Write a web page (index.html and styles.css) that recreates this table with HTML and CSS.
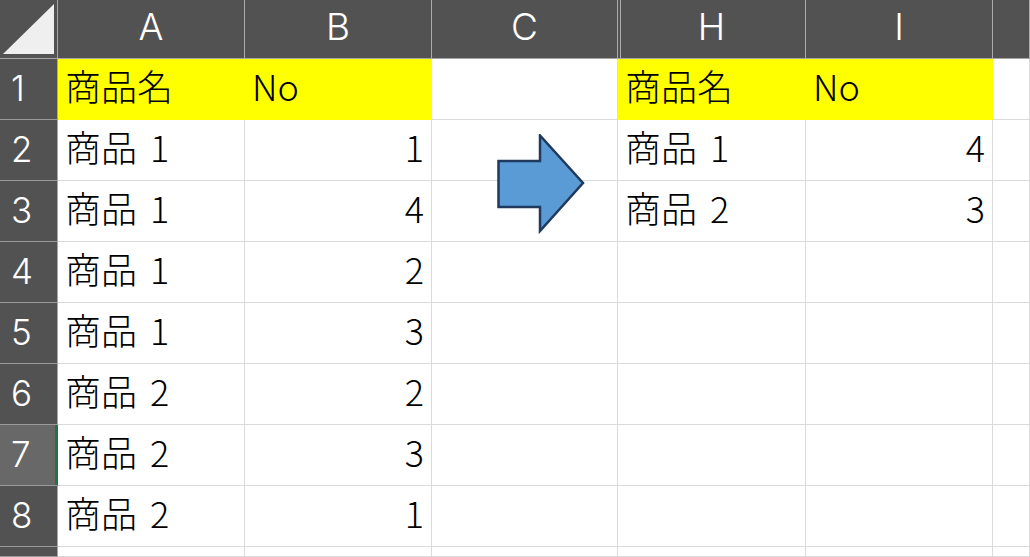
FILE: index.html
```html
<!DOCTYPE html>
<html lang="ja">
<head>
<meta charset="utf-8">
<title>Sheet</title>
<link rel="stylesheet" href="styles.css">
</head>
<body>
<div class="sheet">
  <div class="corner"><svg width="57" height="58" viewBox="0 0 57 58"><polygon points="3,54 54,4 54,54" fill="#efefef"/></svg></div>
  <div class="colhead">A</div>
  <div class="colhead">B</div>
  <div class="colhead">C</div>
  <div class="colhead hidden-before">H</div>
  <div class="colhead">I</div>
  <div class="colhead"></div>

  <div class="rowhead">1</div>
  <div class="cell yellow">商品名</div>
  <div class="cell yellow">No</div>
  <div class="cell"></div>
  <div class="cell yellow">商品名</div>
  <div class="cell yellow">No</div>
  <div class="cell"></div>

  <div class="rowhead">2</div>
  <div class="cell">商品 1</div>
  <div class="cell num">1</div>
  <div class="cell"></div>
  <div class="cell">商品 1</div>
  <div class="cell num">4</div>
  <div class="cell"></div>

  <div class="rowhead">3</div>
  <div class="cell">商品 1</div>
  <div class="cell num">4</div>
  <div class="cell"></div>
  <div class="cell">商品 2</div>
  <div class="cell num">3</div>
  <div class="cell"></div>

  <div class="rowhead">4</div>
  <div class="cell">商品 1</div>
  <div class="cell num">2</div>
  <div class="cell"></div>
  <div class="cell"></div>
  <div class="cell"></div>
  <div class="cell"></div>

  <div class="rowhead">5</div>
  <div class="cell">商品 1</div>
  <div class="cell num">3</div>
  <div class="cell"></div>
  <div class="cell"></div>
  <div class="cell"></div>
  <div class="cell"></div>

  <div class="rowhead">6</div>
  <div class="cell">商品 2</div>
  <div class="cell num">2</div>
  <div class="cell"></div>
  <div class="cell"></div>
  <div class="cell"></div>
  <div class="cell"></div>

  <div class="rowhead selected">7</div>
  <div class="cell">商品 2</div>
  <div class="cell num">3</div>
  <div class="cell"></div>
  <div class="cell"></div>
  <div class="cell"></div>
  <div class="cell"></div>

  <div class="rowhead">8</div>
  <div class="cell">商品 2</div>
  <div class="cell num">1</div>
  <div class="cell"></div>
  <div class="cell"></div>
  <div class="cell"></div>
  <div class="cell"></div>

  <div class="rowhead"></div>
  <div class="cell"></div>
  <div class="cell"></div>
  <div class="cell"></div>
  <div class="cell"></div>
  <div class="cell"></div>
  <div class="cell"></div>

  <svg class="arrow" width="88" height="100" viewBox="0 0 88 100">
    <polygon points="1.5,27 43,27 43,1.5 86,49 43,97 43,73 1.5,73" fill="#5b9bd5" stroke="#1f3a5c" stroke-width="2.5" stroke-linejoin="miter"/>
  </svg>
</div>
</body>
</html>
```

FILE: styles.css
```css
html, body {
  margin: 0;
  padding: 0;
  background: #ffffff;
}

body {
  font-family: "Noto Sans CJK JP", "Noto Sans", sans-serif;
  overflow: hidden;
}

.sheet {
  position: relative;
  width: 1030px;
  height: 557px;
  overflow: hidden;
  display: grid;
  grid-template-columns: 58px 187px 187px 186px 188px 187px 1fr;
  grid-template-rows: 59px repeat(8, 61px) 1fr;
}

.corner {
  background: #525252;
  border-right: 1px solid #a6a6a6;
  border-bottom: 1px solid #a6a6a6;
  box-sizing: border-box;
}

.corner svg {
  display: block;
}

.colhead {
  box-sizing: border-box;
  background: #525252;
  color: #ffffff;
  border-right: 1px solid #ababab;
  border-bottom: 1px solid #a6a6a6;
  display: flex;
  align-items: center;
  justify-content: center;
  font-family: "Inter", "Noto Sans", sans-serif;
  font-size: 37px;
  font-weight: 300;
  line-height: normal;
  padding-bottom: 5px;
}

.hidden-before {
  background: linear-gradient(to right, #525252 0, #525252 2px, #ababab 2px, #ababab 3px, #525252 3px);
}

.rowhead {
  box-sizing: border-box;
  background: #525252;
  color: #ffffff;
  border-right: 1px solid #a6a6a6;
  border-bottom: 1px solid #9a9a9a;
  display: flex;
  align-items: center;
  padding-left: 11px;
  padding-bottom: 3px;
  font-family: "Inter", "Noto Sans", sans-serif;
  font-size: 35px;
  font-weight: 300;
  line-height: normal;
}

.rowhead.selected {
  background: #686868;
  border-right-color: #217346;
  box-shadow: inset -2px 0 0 #217346;
}

.cell {
  box-sizing: border-box;
  border-right: 1px solid #dadada;
  border-bottom: 1px solid #dadada;
  display: flex;
  align-items: center;
  padding: 0 7px 8px 7px;
  font-size: 36px;
  font-weight: 300;
  color: #000000;
  line-height: 1;
  white-space: pre;
  word-spacing: 5px;
}

.cell.num {
  justify-content: flex-end;
}

.cell.yellow {
  background: #ffff00;
  border-color: #ffff00;
}

.arrow {
  position: absolute;
  left: 497px;
  top: 134px;
}
```
